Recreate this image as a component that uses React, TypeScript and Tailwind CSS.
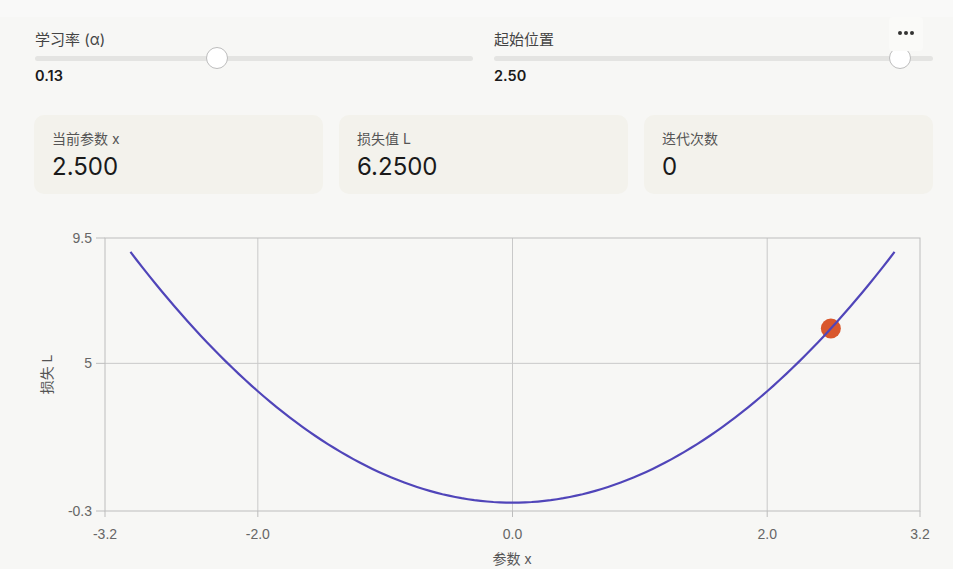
import React from "react";

const FONT = { fontFamily: 'Inter, "Noto Sans CJK SC", sans-serif' };

function Slider({ label, value, thumbLeft }: { label: string; value: string; thumbLeft: string }) {
  return (
    <div className="flex flex-col">
      <div className="text-[15px] leading-[18px] text-[#444]">{label}</div>
      <div className="relative h-[18px] flex items-center">
        <div className="h-[5px] w-full rounded-full bg-[#e4e4e2]" />
        <div
          className={`absolute top-[-2px] h-[22px] w-[22px] rounded-full border border-[#bdbdbd] bg-white ${thumbLeft}`}
        />
      </div>
      <div className="pt-[1px] text-[14.5px] leading-[16px] font-semibold text-[#1a1a1a]">{value}</div>
    </div>
  );
}

function Card({ label, value }: { label: string; value: string }) {
  return (
    <div className="rounded-[10px] bg-[#f3f2ec] pl-[18px] pt-[16px] pb-[13px]">
      <div className="text-[14px] leading-[16px] text-[#555]">{label}</div>
      <div className="mt-[6px] text-[24px] leading-[28px] text-[#1a1a1a]">{value}</div>
    </div>
  );
}

function Chart() {
  const L = 70, R = 885, T = 28, B = 301;
  const sx = (x: number) => L + ((x + 3.2) / 6.4) * (R - L);
  const sy = (y: number) => B - ((y + 0.3) / 9.8) * (B - T);
  const pts: string[] = [];
  for (let i = 0; i <= 120; i++) {
    const x = -3 + (6 * i) / 120;
    pts.push(`${sx(x).toFixed(2)},${sy(x * x).toFixed(2)}`);
  }
  const gridX = [-2, 0, 2];
  const xTicks: [number, string][] = [[-3.2, "-3.2"], [-2, "-2.0"], [0, "0.0"], [2, "2.0"], [3.2, "3.2"]];
  const yTicks: [number, string][] = [[9.5, "9.5"], [5, "5"], [-0.3, "-0.3"]];
  return (
    <svg width="898" height="359" className="block" style={{ fontFamily: '"Liberation Sans", "Noto Sans CJK SC", sans-serif' }}>
      {gridX.map((g) => (
        <line key={g} x1={sx(g)} x2={sx(g)} y1={T} y2={B} stroke="#c9c9c9" strokeWidth="1" />
      ))}
      <line x1={L} x2={R} y1={sy(5)} y2={sy(5)} stroke="#c9c9c9" strokeWidth="1" />
      <rect x={L} y={T} width={R - L} height={B - T} fill="none" stroke="#bdbdbd" strokeWidth="1" />
      {yTicks.map(([v, t]) => (
        <g key={t}>
          <line x1={L - 9} x2={L} y1={sy(v)} y2={sy(v)} stroke="#bdbdbd" />
          <text x={L - 13} y={sy(v) + 5} textAnchor="end" fontSize="14" fill="#666">{t}</text>
        </g>
      ))}
      {xTicks.map(([v, t]) => (
        <g key={t}>
          <line x1={sx(v)} x2={sx(v)} y1={B} y2={B + 6} stroke="#bdbdbd" />
          <text x={sx(v)} y={B + 28} textAnchor="middle" fontSize="14" fill="#666">{t}</text>
        </g>
      ))}
      <text x={477} y={354} textAnchor="middle" fontSize="14" fill="#555">参数 x</text>
      <text x={0} y={0} transform={`translate(17 ${(T + B) / 2}) rotate(-90)`} textAnchor="middle" fontSize="14" fill="#555">损失 L</text>
      <circle cx={sx(2.5)} cy={sy(6.25)} r="10" fill="#d9572c" />
      <polyline points={pts.join(" ")} fill="none" stroke="#5045b9" strokeWidth="2.2" strokeLinejoin="round" />
    </svg>
  );
}

export default function App() {
  return (
    <div className="relative min-h-[569px] w-[953px] overflow-hidden bg-[#f7f7f5]" style={FONT}>
      <div className="h-[17px] bg-[#f9f9f8]" />
      <div className="pl-[35px] pr-[20px] pt-[14px]">
        <div className="grid grid-cols-[438px_439px] gap-x-[21px]">
          <Slider label="学习率 (α)" value="0.13" thumbLeft="left-[171px]" />
          <Slider label="起始位置" value="2.50" thumbLeft="left-[395px]" />
        </div>
        <div className="mt-[31px] grid grid-cols-3 gap-x-[16px] -ml-[1px]">
          <Card label="当前参数 x" value="2.500" />
          <Card label="损失值 L" value="6.2500" />
          <Card label="迭代次数" value="0" />
        </div>
        <div className="mt-[16px]">
          <Chart />
        </div>
      </div>
      <div className="absolute right-[30px] top-[17px] flex h-[34px] w-[34px] items-start justify-center gap-[2.5px] rounded-[4px] bg-[#fafaf8] pt-[14px]">
        <span className="h-[3.5px] w-[3.5px] rounded-full bg-[#333]" />
        <span className="h-[3.5px] w-[3.5px] rounded-full bg-[#333]" />
        <span className="h-[3.5px] w-[3.5px] rounded-full bg-[#333]" />
      </div>
    </div>
  );
}
